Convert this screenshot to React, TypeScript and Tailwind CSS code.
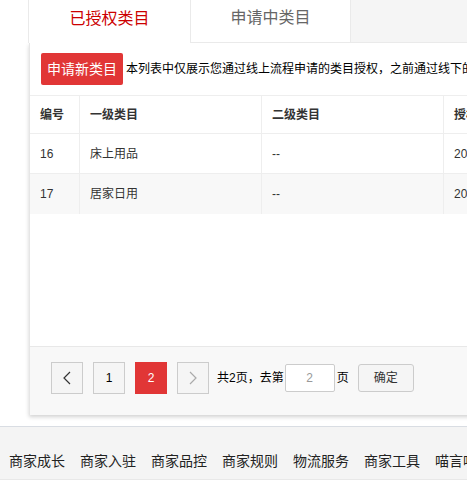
import React from 'react';

const FONT = { fontFamily: '"Liberation Sans", "Noto Sans CJK SC", sans-serif' };

const rows = [
  { id: '16', first: '床上用品', second: '--', date: '2019-01-01' },
  { id: '17', first: '居家日用', second: '--', date: '2019-01-01' },
];

const footerLinks = ['商家成长', '商家入驻', '商家品控', '商家规则', '物流服务', '商家工具', '喵言喵语'];

function Chevron({ dir, color }: { dir: 'left' | 'right'; color: string }) {
  return (
    <svg width="8" height="14" viewBox="0 0 8 14" fill="none" stroke={color} strokeWidth={1.2}>
      {dir === 'left' ? <path d="M7 1L1 7l6 6" /> : <path d="M1 1l6 6-6 6" />}
    </svg>
  );
}

export default function App() {
  return (
    <div className="w-[467px] h-[483px] overflow-hidden bg-white relative" style={FONT}>
      <div className="w-[800px]">
        {/* tabs */}
        <div className="flex h-[43px] ml-[28px]">
          <div className="w-[162px] bg-white border-l border-[#eaeaea] flex items-center justify-center pb-[6px] text-[16px] text-[#cc0000]">
            已授权类目
          </div>
          <div className="w-[161px] bg-white border-l border-r border-b border-[#eaeaea] flex items-center justify-center pb-[6px] text-[16px] text-[#666]">
            申请中类目
          </div>
          <div className="flex-1 bg-[#f5f5f5] border-b border-[#eaeaea]" />
        </div>

        {/* card */}
        <div className="ml-[29px] bg-white border-l border-[#e6e6e6] shadow-[0_2px_4px_rgba(0,0,0,0.18)]">
          <div className="h-[53px] pl-[11px] flex items-center border-b border-[#eeeeee]">
            <button className="w-[82px] h-[32px] bg-[#e13636] rounded-[2px] text-white text-[14px]">申请新类目</button>
            <span className="ml-[3px] text-[12px] text-black whitespace-nowrap">
              本列表中仅展示您通过线上流程申请的类目授权，之前通过线下的类目授权请联系您的运营
            </span>
          </div>

          <div className="text-[12px] text-[#333]">
            <div className="flex h-[38px] items-center font-semibold border-b border-[#eeeeee]">
              <div className="w-[50px] pl-[10px] h-full flex items-center border-r border-[#eeeeee]">编号</div>
              <div className="w-[182px] pl-[10px] h-full flex items-center border-r border-[#eeeeee]">一级类目</div>
              <div className="w-[182px] pl-[10px] h-full flex items-center border-r border-[#eeeeee]">二级类目</div>
              <div className="flex-1 pl-[10px] h-full flex items-center whitespace-nowrap">授权时间</div>
            </div>
            {rows.map((r, i) => (
              <div key={r.id} className={`flex h-[40px] items-center ${i === 0 ? 'border-b border-[#eeeeee] bg-white' : 'bg-[#f8f8f8]'}`}>
                <div className="w-[50px] pl-[10px] h-full flex items-center border-r border-[#eeeeee]">{r.id}</div>
                <div className="w-[182px] pl-[10px] h-full flex items-center border-r border-[#eeeeee]">{r.first}</div>
                <div className="w-[182px] pl-[10px] h-full flex items-center border-r border-[#eeeeee]">{r.second}</div>
                <div className="flex-1 pl-[10px] h-full flex items-center whitespace-nowrap">{r.date}</div>
              </div>
            ))}
          </div>

          <div className="h-[132px]" />

          {/* pagination */}
          <div className="h-[69px] bg-[#f8f8f8] border-t border-[#e8e8e8] pl-[21px] pt-[15px] flex items-start text-[12px] text-black">
            <div className="w-[32px] h-[32px] border border-[#cccccc] bg-[#f5f5f5] flex items-center justify-center">
              <Chevron dir="left" color="#333" />
            </div>
            <div className="ml-[10px] w-[32px] h-[32px] border border-[#cccccc] bg-[#f5f5f5] flex items-center justify-center text-[12px]">1</div>
            <div className="ml-[10px] w-[32px] h-[32px] bg-[#e13636] text-white flex items-center justify-center text-[12px]">2</div>
            <div className="ml-[10px] w-[32px] h-[32px] border border-[#cccccc] bg-[#f5f5f5] flex items-center justify-center">
              <Chevron dir="right" color="#aaa" />
            </div>
            <div className="ml-[8px] h-[32px] flex items-center">共2页，去第</div>
            <div className="ml-[1px] mt-[2px] w-[50px] h-[28px] bg-white border border-[#cccccc] rounded-[2px] flex items-center justify-center text-[#999]">2</div>
            <div className="ml-[2px] h-[32px] flex items-center">页</div>
            <button className="ml-[9px] mt-[2px] w-[56px] h-[28px] bg-[#f5f5f5] border border-[#cccccc] rounded-[3px] text-[12px] text-[#333]">确定</button>
          </div>
        </div>

        {/* footer */}
        <div className="mt-[11px] h-[54px] bg-[#f4f4f4] border-t border-[#d9dde3] border-b border-b-[#e8e8e8] pl-[9px] pt-[24px] flex gap-[15px]">
          {footerLinks.map((l) => (
            <span key={l} className="text-[14px] leading-[20px] text-[#222] whitespace-nowrap">{l}</span>
          ))}
        </div>
      </div>
    </div>
  );
}
